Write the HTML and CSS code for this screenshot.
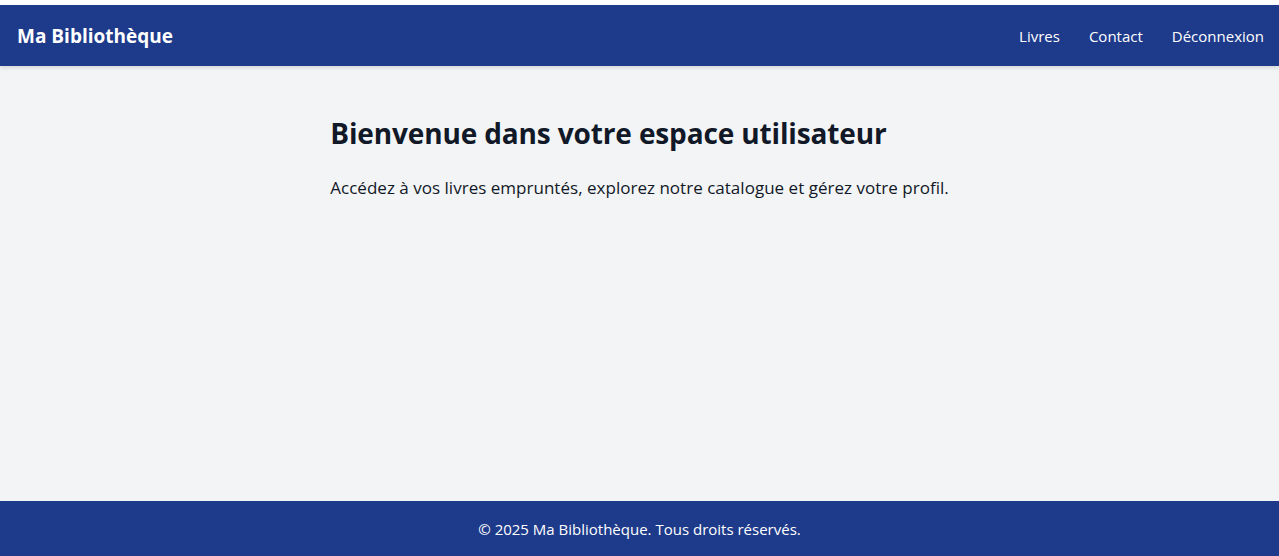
FILE: index.html
```html
<!DOCTYPE html>
<html lang="fr">
<head>
<meta charset="utf-8">
<title>Ma Bibliothèque</title>
<link rel="stylesheet" href="styles.css">
</head>
<body>
<div class="page">
  <header class="topbar">
    <div class="brand">Ma Bibliothèque</div>
    <nav class="nav">
      <a href="#">Livres</a>
      <a href="#">Contact</a>
      <a href="#">Déconnexion</a>
    </nav>
  </header>
  <main class="main">
    <div class="content">
      <h1 class="title">Bienvenue dans votre espace utilisateur</h1>
      <p class="lead">Accédez à vos livres empruntés, explorez notre catalogue et gérez votre profil.</p>
    </div>
  </main>
  <footer class="footer">© 2025 Ma Bibliothèque. Tous droits réservés.</footer>
</div>
</body>
</html>
```
FILE: styles.css
```css
html, body {
  margin: 0;
  padding: 0;
  height: 100%;
}
body {
  font-family: "Open Sans", "Noto Sans", sans-serif;
  background: #ffffff;
}
.page {
  display: flex;
  flex-direction: column;
  height: 556px;
  padding-top: 5px;
  box-sizing: border-box;
}
.topbar {
  background: #1e3a8a;
  color: #fff;
  height: 61px;
  display: flex;
  align-items: center;
  justify-content: space-between;
  padding: 0 15px 0 17px;
  box-shadow: 0 2px 4px rgba(0,0,0,0.12);
  position: relative;
  z-index: 1;
}
.brand {
  font-weight: 700;
  font-size: 19px;
}
.nav {
  display: flex;
  gap: 29px;
}
.nav a {
  color: #fff;
  text-decoration: none;
  font-size: 15px;
}
.main {
  flex: 1;
  background: #f3f4f6;
}
.content {
  width: fit-content;
  margin: 0 auto;
  padding-top: 49px;
  color: #111827;
}
.title {
  margin: 0 0 23px;
  font-size: 28px;
  line-height: 36px;
  font-weight: 700;
  letter-spacing: -0.14px;
}
.lead {
  margin: 0;
  font-size: 17px;
  line-height: 28px;
  letter-spacing: 0.02px;
}
.footer {
  background: #1e3a8a;
  color: #fff;
  height: 55px;
  display: flex;
  align-items: center;
  justify-content: center;
  font-size: 15px;
}
```
